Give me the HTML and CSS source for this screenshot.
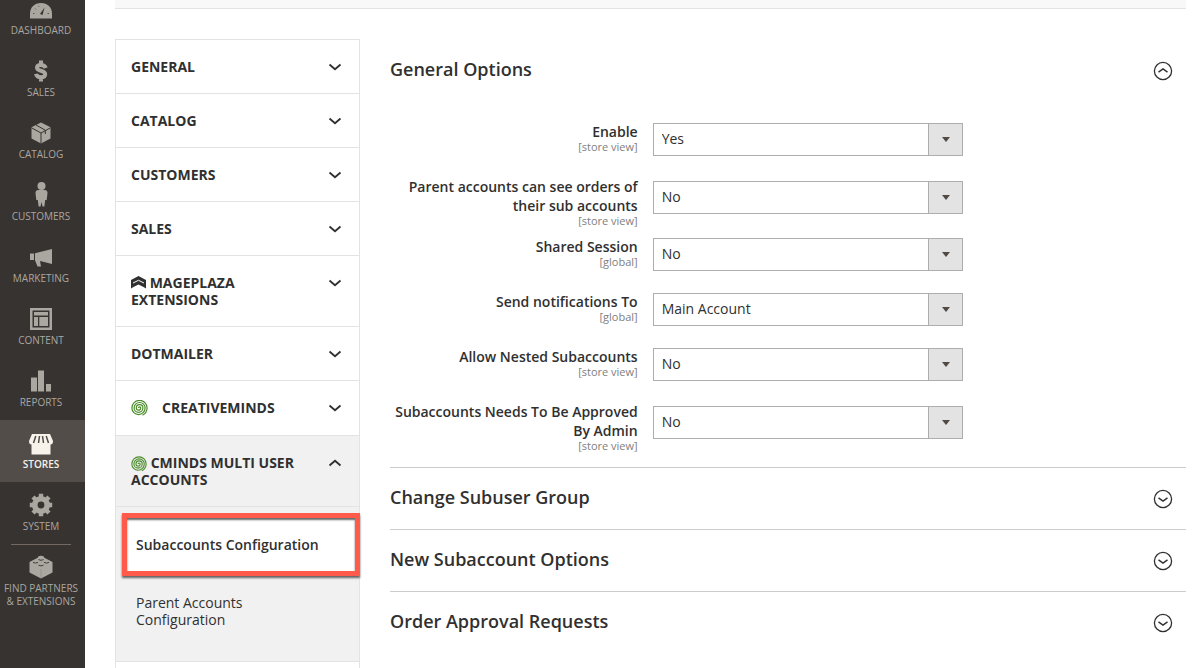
FILE: index.html
```html
<!DOCTYPE html>
<html lang="en">
<head>
    <meta charset="utf-8">
    <title>Configuration / Stores / Magento Admin</title>
    <link rel="stylesheet" href="styles.css">
</head>
<body>
    <!-- Shared icons -->
    <svg class="sprite" width="0" height="0">
        <symbol id="chevron" viewBox="0 0 14 8">
            <path d="M1.5 1.5 L7 6.2 L12.5 1.5" fill="none" stroke="currentColor" stroke-width="1.8"/>
        </symbol>
        <symbol id="circle-arrow" viewBox="0 0 20 20">
            <circle cx="10" cy="10" r="8.6" fill="none" stroke="currentColor" stroke-width="1.3"/>
            <path d="M5.5 8.8 L10 12 L14.5 8.8" fill="none" stroke="currentColor" stroke-width="1.5"/>
        </symbol>
        <symbol id="spiral" viewBox="0 0 17 16">
            <path d="M7.5 8 A1.1 1.1 0 0 1 9.7 8 A2.2 2.2 0 0 1 5.3 8 A3.3 3.3 0 0 1 11.9 8 A4.4 4.4 0 0 1 3.1 8 A5.5 5.5 0 0 1 14.1 8 A6.6 6.6 0 0 1 .9 8 A7.6 7.6 0 0 1 16.1 8 A8.5 8.5 0 0 1 11.5 15.2" fill="none" stroke="#4c8c2b" stroke-width="1.2"/>
        </symbol>
    </svg>

    <div class="page">
        <nav class="admin-menu">
            <ul>
                <li>
                    <a href="#">
                        <svg viewBox="0 0 24 24"><path d="M1 21.5 V17 C1 10 5.5 6 12 6 S23 10 23 17 V21.5 Z" fill="currentColor"/><path d="M11 17 L15.5 10.5 L13.5 18 Z" fill="#373330"/><path d="M4 16.5h1.5M6 11.5l1 1M9.5 8.8l.5 1M18.5 16.5H20" stroke="#373330" stroke-width=".7"/></svg>
                        <span>DASHBOARD</span>
                    </a>
                </li>
                <li>
                    <a href="#">
                        <svg viewBox="0 0 24 24"><path d="M16.8 9 C16 6.8 14.2 5.9 11.8 5.9 C9.5 5.9 8 7 8 8.8 C8 12.6 16.2 10.8 16.2 15.2 C16.2 17.2 14.3 18.2 12 18.2 C9.3 18.2 7.5 17.2 7 14.8 M12 1.5v4 M12 18.5V22.5" fill="none" stroke="currentColor" stroke-width="4"/></svg>
                        <span>SALES</span>
                    </a>
                </li>
                <li>
                    <a href="#">
                        <svg viewBox="0 0 24 24"><path d="M12 1.5 L21.5 6.2 V17.6 L12 22.5 L2.5 17.6 V6.2 Z" fill="currentColor"/><path d="M2.5 6.8 L12 12 L21.5 6.8 M12 12 V22.5 M7 4 L16.3 9.2 V13" fill="none" stroke="#373330" stroke-width="1"/></svg>
                        <span>CATALOG</span>
                    </a>
                </li>
                <li>
                    <a href="#">
                        <svg class="person" viewBox="0 0 24 24"><circle cx="12.5" cy="3" r="4" fill="currentColor"/><path d="M9.5 7 H15.5 Q18.5 7 18.5 10 L17.7 17 H16.2 L15.4 23.5 H13.5 L12.5 19 L11.5 23.5 H9.6 L8.8 17 H7.3 L6.5 10 Q6.5 7 9.5 7 Z" fill="currentColor"/></svg>
                        <span>CUSTOMERS</span>
                    </a>
                </li>
                <li>
                    <a href="#">
                        <svg viewBox="0 0 24 24"><path d="M1 8.5 H5 V15 H1 Z M6 8.3 L23 4 V19 L11 16 L12 21.5 L8.5 21.5 L6 15.2 Z" fill="currentColor"/></svg>
                        <span>MARKETING</span>
                    </a>
                </li>
                <li>
                    <a href="#">
                        <svg viewBox="0 0 24 24"><path d="M1 1 H23 V23 H1 Z M3.5 3.5 V20.5 H20.5 V3.5 Z" fill="currentColor" fill-rule="evenodd"/><path d="M5 5h14v3.5H5z M5 10h4v9H5z M10.3 10H19v9h-8.7z" fill="currentColor"/></svg>
                        <span>CONTENT</span>
                    </a>
                </li>
                <li>
                    <a href="#">
                        <svg viewBox="0 0 24 24"><path d="M2 8.5h6v14h-6z M9 1.5h6v21h-6z M17 15h5v7.5h-5z" fill="currentColor"/></svg>
                        <span>REPORTS</span>
                    </a>
                </li>
                <li class="active">
                    <a href="#">
                        <svg viewBox="0 0 24 24"><path d="M3 3 H21 L24 10 Q24 13.5 21.5 13.5 V23.5 H2.5 V13.5 Q0 13.5 0 10 Z" fill="currentColor"/><path d="M6.8 5 L4.5 12 M10.5 5 L9.5 12 M13.5 5 L14.5 12 M17.2 5 L19.5 12" stroke="#524d49" stroke-width="1.5"/></svg>
                        <span>STORES</span>
                    </a>
                </li>
                <li>
                    <a href="#">
                        <svg viewBox="0 0 24 24"><circle cx="12" cy="12" r="6.2" fill="none" stroke="currentColor" stroke-width="5.6"/><path d="M12 .8v4M12 19.2v4M.8 12h4M19.2 12h4M4 4l3 3M17 17l3 3M4 20l3-3M17 7l3-3" stroke="currentColor" stroke-width="4.4"/></svg>
                        <span>SYSTEM</span>
                    </a>
                </li>
                <li class="partners">
                    <a href="#">
                        <svg viewBox="0 0 24 24"><path d="M0.5 7 L12 1 L23.5 7 V17.5 L12 23.5 L0.5 17.5 Z" fill="currentColor"/><ellipse cx="12" cy="3" rx="3.2" ry="2.2" fill="currentColor"/><path d="M9.5 4.6q2.5 1.4 5 0M4 7.4q2.5 1.4 5 0M15 7.4q2.5 1.4 5 0M9.5 10.2q2.5 1.4 5 0" fill="none" stroke="#373330" stroke-width=".9"/><path d="M12 14v9" stroke="#8b8680" stroke-width=".6"/></svg>
                        <span>FIND PARTNERS &amp; EXTENSIONS</span>
                    </a>
                </li>
            </ul>
        </nav>

        <div class="content">
            <div class="page-actions"></div>

            <div class="columns">
                <aside class="config-nav">
                    <button type="button" class="tab"><span>GENERAL</span><svg class="chevron"><use href="#chevron"/></svg></button>
                    <button type="button" class="tab"><span>CATALOG</span><svg class="chevron"><use href="#chevron"/></svg></button>
                    <button type="button" class="tab"><span>CUSTOMERS</span><svg class="chevron"><use href="#chevron"/></svg></button>
                    <button type="button" class="tab"><span>SALES</span><svg class="chevron"><use href="#chevron"/></svg></button>
                    <button type="button" class="tab">
                        <span><svg class="tab-icon mageplaza" viewBox="0 0 15 13"><path d="M0 4 L7.5 0 L15 4 V12.5 L12.5 11 L7.5 8.6 L2.5 11 L0 12.5 Z" fill="currentColor"/><path d="M2 7 L7.5 4.3 L13 7" fill="none" stroke="#fff" stroke-width="1"/></svg> MAGEPLAZA EXTENSIONS</span>
                        <svg class="chevron"><use href="#chevron"/></svg>
                    </button>
                    <button type="button" class="tab"><span>DOTMAILER</span><svg class="chevron"><use href="#chevron"/></svg></button>
                    <button type="button" class="tab tab-creative">
                        <span><svg class="spiral"><use href="#spiral"/></svg>CREATIVEMINDS</span>
                        <svg class="chevron"><use href="#chevron"/></svg>
                    </button>
                    <button type="button" class="tab open" aria-expanded="true">
                        <span><svg class="tab-icon"><use href="#spiral"/></svg> CMINDS MULTI USER ACCOUNTS</span>
                        <svg class="chevron"><use href="#chevron"/></svg>
                    </button>
                    <ul class="sub-items">
                        <li class="current"><a href="#">Subaccounts Configuration</a></li>
                        <li><a href="#">Parent Accounts Configuration</a></li>
                    </ul>
                </aside>

                <main class="sections">
                    <section>
                        <h2><a href="#">General Options <svg class="circle-arrow up"><use href="#circle-arrow"/></svg></a></h2>
                        <form class="fields">
                            <div class="field">
                                <label for="enable">Enable <small>[store view]</small></label>
                                <div class="select">
                                    <select id="enable"><option>Yes</option><option>No</option></select>
                                </div>
                            </div>
                            <div class="field">
                                <label for="see_orders">Parent accounts can see orders of their sub accounts <small>[store view]</small></label>
                                <div class="select">
                                    <select id="see_orders"><option>No</option><option>Yes</option></select>
                                </div>
                            </div>
                            <div class="field">
                                <label for="shared_session">Shared Session <small>[global]</small></label>
                                <div class="select">
                                    <select id="shared_session"><option>No</option><option>Yes</option></select>
                                </div>
                            </div>
                            <div class="field">
                                <label for="notifications">Send notifications To <small>[global]</small></label>
                                <div class="select">
                                    <select id="notifications"><option>Main Account</option></select>
                                </div>
                            </div>
                            <div class="field">
                                <label for="nested">Allow Nested Subaccounts <small>[store view]</small></label>
                                <div class="select">
                                    <select id="nested"><option>No</option><option>Yes</option></select>
                                </div>
                            </div>
                            <div class="field">
                                <label for="approval">Subaccounts Needs To Be Approved By Admin <small>[store view]</small></label>
                                <div class="select">
                                    <select id="approval"><option>No</option><option>Yes</option></select>
                                </div>
                            </div>
                        </form>
                    </section>
                    <section>
                        <h2><a href="#">Change Subuser Group <svg class="circle-arrow"><use href="#circle-arrow"/></svg></a></h2>
                    </section>
                    <section>
                        <h2><a href="#">New Subaccount Options <svg class="circle-arrow"><use href="#circle-arrow"/></svg></a></h2>
                    </section>
                    <section>
                        <h2><a href="#">Order Approval Requests <svg class="circle-arrow"><use href="#circle-arrow"/></svg></a></h2>
                    </section>
                </main>
            </div>
        </div>
    </div>
</body>
</html>
```

FILE: styles.css
```css
* {
    box-sizing: border-box;
}

body {
    margin: 0;
    font-family: "Open Sans", "Noto Sans", sans-serif;
    font-size: 14px;
    color: #303030;
    background: #fff;
}

a {
    color: inherit;
    text-decoration: none;
}

ul {
    list-style: none;
    margin: 0;
    padding: 0;
}

.sprite {
    position: absolute;
}

.page {
    display: flex;
    height: 100vh;
    overflow: hidden;
}

/* Left admin menu */
.admin-menu {
    display: flex;
    flex: none;
    width: 85px;
    background: #373330;
    color: #aaa6a0;
}

.admin-menu ul {
    width: 100%;
    margin-top: -14px; /* first item is scrolled partly out of view */
}

.admin-menu a {
    display: flex;
    flex-direction: column;
    align-items: center;
    gap: 3px;
    height: 62px;
    padding: 11px 0;
    margin-right: 3px;
    font-size: 10px;
    line-height: 13px;
    text-align: center;
}

.admin-menu svg {
    flex: none;
    width: 24px;
    height: 24px;
}

.admin-menu .person {
    overflow: visible;
}

.admin-menu .active {
    background: #524d49;
    color: #f7f3eb;
    font-weight: 600;
}

.partners::before {
    content: "";
    display: block;
    height: 1px;
    margin: 0 14px -1px 11px;
    background: #736963;
}

/* Content */
.content {
    flex: 1;
    padding: 0 10px 0 30px;
}

.page-actions {
    height: 9px;
    background: #f8f8f8;
    border-bottom: 1px solid #e3e3e3;
}

.columns {
    display: flex;
    gap: 30px;
    padding-top: 30px;
}

/* Config tabs */
.config-nav {
    flex: none;
    width: 245px;
    height: 100vh;
    border: 1px solid #e3e3e3;
}

.tab {
    display: flex;
    justify-content: space-between;
    align-items: flex-start;
    width: 100%;
    padding: 18px 17px 18px 15px;
    border: 0;
    border-bottom: 1px solid #e3e3e3;
    background: none;
    color: inherit;
    font: bold 14px/17px "Open Sans", "Noto Sans", sans-serif;
    text-align: left;
    cursor: pointer;
}

.tab span {
    max-width: 180px;
}

.chevron {
    flex: none;
    width: 14px;
    height: 8px;
    margin-top: 5px;
}

.tab-icon {
    width: 16px;
    height: 16px;
    margin: -2px 0;
    vertical-align: -2px;
}

.mageplaza {
    width: 15px;
    height: 13px;
    margin: 0;
    vertical-align: -1px;
}

.tab-creative span {
    display: flex;
    align-items: center;
    gap: 14px;
    line-height: 18px;
}

.spiral {
    width: 17px;
    height: 16px;
}

.open {
    background: #f1f1f1;
}

.open .chevron {
    transform: rotate(180deg);
}

.sub-items {
    padding: 6px 0 15px 6px;
    background: #f1f1f1;
    border-bottom: 1px solid #e3e3e3;
    line-height: 17px;
}

.sub-items a {
    display: block;
    padding: 18px 80px 18px 14px;
}

.sub-items .current {
    margin-right: -1px;
    border: 5px solid #ff5a4a;
    background: #fff;
    box-shadow: 0 2px 2px rgba(0, 0, 0, 0.6), inset 0 2px 2px rgba(0, 0, 0, 0.6);
    font-weight: 600;
}

.sub-items .current a {
    padding: 18px 9px;
}

/* Sections */
.sections {
    flex: 1;
    padding-top: 1px;
}

.sections section + section {
    border-top: 1px solid #ccc;
}

h2 {
    margin: 0;
    font-size: 18px;
    font-weight: 600;
    line-height: 25px;
}

h2 a {
    display: flex;
    justify-content: space-between;
    align-items: center;
    padding: 17px 13px 19px 0;
}

.circle-arrow {
    width: 20px;
    height: 20px;
    margin-top: 2px;
}

.up {
    transform: rotate(180deg);
}

.fields {
    padding: 21px 0 5px;
}

.field {
    display: grid;
    grid-template-columns: 33fr 39fr 28fr;
    align-items: center;
}

.field label {
    align-self: start;
    padding: 0 15px 11px 0;
    font-weight: 600;
    line-height: 19px;
    text-align: right;
}

.field small {
    display: block;
    color: #808080;
    font-size: 11px;
    font-weight: 400;
    line-height: 11px;
}

.select {
    position: relative;
    margin: 1px 0 21px;
}

.select select {
    display: block;
    appearance: none;
    width: 100%;
    height: 33px;
    padding: 0 43px 2px 8px;
    border: 1px solid #adadad;
    border-radius: 0;
    background: linear-gradient(to left, #e3e3e3 33px, #adadad 33px, #adadad 34px, #fff 34px);
    color: #303030;
    font: 14px "Open Sans", "Noto Sans", sans-serif;
}

/* drop-down arrow */
.select::after {
    content: "";
    position: absolute;
    top: 14px;
    right: 13px;
    border: 4px solid transparent;
    border-top: 5px solid #514943;
    border-bottom: 0;
    pointer-events: none;
}
```
